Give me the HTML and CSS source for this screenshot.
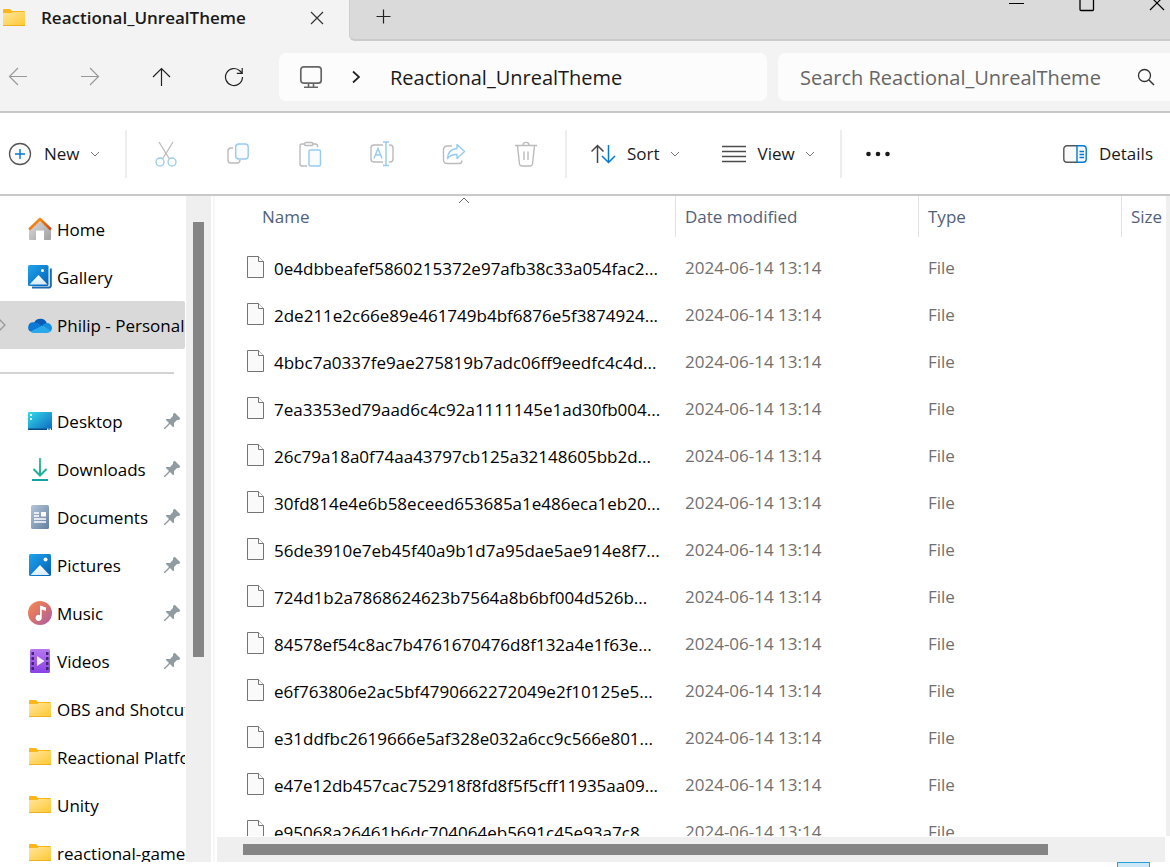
FILE: index.html
```html
<!DOCTYPE html>
<html lang="en">
<head>
<meta charset="utf-8">
<title>Reactional_UnrealTheme</title>
<link rel="stylesheet" href="styles.css">
</head>
<body>
<svg class="defs" aria-hidden="true">
  <defs>
    <linearGradient id="gFolder" x1="0" y1="0" x2="1" y2="1"><stop offset="0" stop-color="#ffe69c"/><stop offset="1" stop-color="#ffc934"/></linearGradient>
    <linearGradient id="gRoof" x1="0" y1="0" x2="1" y2="0"><stop offset="0" stop-color="#ee7a1c"/><stop offset=".5" stop-color="#f58a10"/><stop offset="1" stop-color="#d2430f"/></linearGradient>
    <linearGradient id="gWall" x1="0" y1="0" x2="1" y2="1"><stop offset="0" stop-color="#dedede"/><stop offset="1" stop-color="#a0a0a0"/></linearGradient>
    <linearGradient id="gPic" x1="0" y1="0" x2="1" y2="1"><stop offset="0" stop-color="#1ea4ee"/><stop offset="1" stop-color="#0560b4"/></linearGradient>
    <linearGradient id="gHill" x1="0" y1="0" x2="0" y2="1"><stop offset="0" stop-color="#fff"/><stop offset="1" stop-color="#d5ebfb"/></linearGradient>
    <linearGradient id="gDesk" x1="0" y1="0" x2="1" y2="1"><stop offset="0" stop-color="#35dbe8"/><stop offset="1" stop-color="#0a68c0"/></linearGradient>
    <linearGradient id="gDown" x1="0" y1="0" x2="0" y2="1"><stop offset="0" stop-color="#3bc98b"/><stop offset="1" stop-color="#0fa3a3"/></linearGradient>
    <linearGradient id="gDoc" x1="0" y1="0" x2="1" y2="1"><stop offset="0" stop-color="#b3c6da"/><stop offset="1" stop-color="#647f9f"/></linearGradient>
    <linearGradient id="gMusic" x1="0" y1="0" x2="1" y2="1"><stop offset="0" stop-color="#f58d52"/><stop offset=".5" stop-color="#d7706d"/><stop offset="1" stop-color="#a45cae"/></linearGradient>
    <linearGradient id="gVideo" x1="0" y1="0" x2="0" y2="1"><stop offset="0" stop-color="#b678f0"/><stop offset="1" stop-color="#8842e4"/></linearGradient>
    <symbol id="folder" viewBox="0 1 24 24">
      <path d="M1 5a1 1 0 0 1 1-1h6l2 2h12a1 1 0 0 1 1 1v4H1z" fill="#f9b71b"/>
      <path d="M1 8h8l2-1h12v13H1z" fill="url(#gFolder)"/><path d="M1 20h22v1H1z" fill="#eeb022"/>
    </symbol>
    <symbol id="pin" viewBox="0 0 16 16">
      <path d="M10 0h1l5 5v1l-1 1h-2l-3 3v4h-1L6 11l-5 5H0v-1l5-5-3-3V6h4l3-3V1z" fill="#919ba2"/>
    </symbol>
    <symbol id="file" viewBox="0 0 18 22">
      <path d="M.5.5h11l5 5v16H.5z" fill="#fafafa" stroke="#747474"/><path d="M11.500.5v5h5" fill="#fff" stroke="#747474"/>
    </symbol>
    <symbol id="chev" viewBox="0 0 10 6"><path d="M1 1l4 4 4-4" fill="none" stroke="#777"/></symbol>
  </defs>
</svg>

<div class="window">
  <header class="titlebar">
    <div class="tab">
      <svg class="ico24" aria-hidden="true"><use href="#folder"/></svg>
      <span class="tab-title">Reactional_UnrealTheme</span>
      <button class="icon-btn" aria-label="Close tab"><svg width="14" height="14" viewBox="0 0 14 14"><path d="M1 1l12 12M13 1L1 13" stroke="#333" stroke-width="1.200"/></svg></button>
    </div>
    <div class="tab-strip">
      <button class="icon-btn" aria-label="New tab"><svg width="16" height="16" viewBox="0 0 16 16"><path d="M7.500 .5v14M.5 7.500h14" stroke="#222" stroke-width="1.200"/></svg></button>
      <div class="caption">
        <button class="icon-btn" aria-label="Minimize"><svg width="16" height="16" viewBox="0 0 16 16"><path d="M0 7.500h15" stroke="#000"/></svg></button>
        <button class="icon-btn" aria-label="Maximize"><svg width="16" height="16" viewBox="0 0 16 16"><rect x="1" y="1" width="13.500" height="13.500" rx="1" fill="none" stroke="#000" stroke-width="1.300"/></svg></button>
        <button class="icon-btn" aria-label="Close"><svg width="16" height="16" viewBox="0 0 16 16"><path d="M1 0l14 14M15 0L1 14" stroke="#000" stroke-width="1.200"/></svg></button>
      </div>
    </div>
  </header>

  <div class="navbar">
    <div class="nav-buttons">
      <button class="icon-btn" aria-label="Back" disabled><svg width="20" height="20" viewBox="0 0 20 20"><path d="M19 9.500H1.500M10 1L1.500 9.500l8.500 8.500" fill="none" stroke="#999" stroke-width="1.200"/></svg></button>
      <button class="icon-btn" aria-label="Forward" disabled><svg width="20" height="20" viewBox="0 0 20 20"><path d="M1 9.500h17.500M10 1l8.500 8.500-8.500 8.500" fill="none" stroke="#999" stroke-width="1.200"/></svg></button>
      <button class="icon-btn" aria-label="Up"><svg width="20" height="20" viewBox="0 0 20 20"><path d="M9.500 19V1.500M1 10l8.500-8.500L18 10" fill="none" stroke="#222" stroke-width="1.200"/></svg></button>
      <button class="icon-btn" aria-label="Refresh"><svg width="20" height="20" viewBox="0 0 20 20"><path d="M18.500 10A8.500 8.500 0 1 1 16 4l2 2.200M18.200 1v5.400h-5.400" fill="none" stroke="#222" stroke-width="1.200"/></svg></button>
    </div>
    <div class="address">
      <svg width="24" height="24" viewBox="0 0 24 24" aria-hidden="true"><rect x="1.800" y="1.800" width="20.400" height="16.400" rx="3" fill="none" stroke="#666" stroke-width="1.700"/><path d="M9.500 18v3.500M14.500 18v3.500M5 22.200h14" stroke="#666" stroke-width="1.600"/></svg>
      <svg width="8" height="14" viewBox="0 0 8 14" aria-hidden="true"><path d="M1 1.500l6 5.500-6 5.500" fill="none" stroke="#222" stroke-width="1.700"/></svg>
      <span>Reactional_UnrealTheme</span>
    </div>
    <div class="search">
      <input type="search" aria-label="Search" placeholder="Search Reactional_UnrealTheme">
      <svg width="18" height="18" viewBox="0 0 18 18" aria-hidden="true"><circle cx="7.500" cy="7.500" r="6" fill="none" stroke="#333" stroke-width="1.300"/><path d="M12 12l5 5" stroke="#333" stroke-width="1.500"/></svg>
    </div>
  </div>

  <div class="toolbar">
    <button class="tool tool-new"><svg width="26" height="24" viewBox="0 0 26 24"><circle cx="12" cy="12" r="10.500" fill="#fafafa" stroke="#555" stroke-width="1.300"/><path d="M12 7v10M7 12h10" stroke="#0078d4" stroke-width="1.400"/></svg>New<svg class="chev"><use href="#chev"/></svg></button>
    <div class="tool-icons">
      <button class="icon-btn" aria-label="Cut" disabled><svg width="24" height="26" viewBox="0 0 24 26" fill="none" stroke-width="1.300"><path d="M5 1l10.500 17M19 1L8.500 18" stroke="#bbb"/><circle cx="6" cy="21" r="4" stroke="#97caef"/><circle cx="18" cy="21" r="4" stroke="#97caef"/></svg></button>
      <button class="icon-btn" aria-label="Copy" disabled><svg width="24" height="26" viewBox="0 0 24 26" fill="none" stroke-width="1.400"><path d="M7 7H5a3 3 0 0 0-3 3v9a3 3 0 0 0 3 3h6a3 3 0 0 0 3-3" stroke="#bbb"/><rect x="9.700" y="3" width="12.500" height="15" rx="3" fill="#f8fbff" stroke="#97caef"/></svg></button>
      <button class="icon-btn" aria-label="Paste" disabled><svg width="24" height="26" viewBox="0 0 24 26" fill="none" stroke-width="1.400"><path d="M6.500 3H4a2 2 0 0 0-2 2v18a2 2 0 0 0 2 2h5M15 3h2.500a2 2 0 0 1 2 2v1" stroke="#bbb"/><rect x="6.500" y="1.500" width="8.500" height="3" rx="1.500" stroke="#bbb"/><rect x="11" y="9" width="11.500" height="16" rx="1.500" fill="#f8fbff" stroke="#97caef"/></svg></button>
      <button class="icon-btn" aria-label="Rename" disabled><svg width="24" height="26" viewBox="1 0 24 26" fill="none" stroke-width="1.400"><path d="M14 4H5a3 3 0 0 0-3 3v11a3 3 0 0 0 3 3h9M20 4h1a3 3 0 0 1 3 3v11a3 3 0 0 1-3 3h-1" stroke="#bbb"/><path d="M5 17.500L9 7.500l4 10M6.500 14h5.500M14 1h6M14 24.500h6M17 1v23.500" stroke="#97caef"/></svg></button>
      <button class="icon-btn" aria-label="Share" disabled><svg width="24" height="26" viewBox="0 0 24 26" fill="none" stroke-width="1.400"><path d="M10 5H5a3.500 3.500 0 0 0-3.500 3.500V19A3.500 3.500 0 0 0 5 22.500h12a3 3 0 0 0 3-3" stroke="#bbb"/><path d="M15 3.500l7.500 7-7.500 7v-4c-4.500-.3-7 1-9.500 4 .3-6 3.500-9.500 9.500-10z" fill="#f8fbff" stroke="#97caef" stroke-linejoin="round"/></svg></button>
      <button class="icon-btn" aria-label="Delete" disabled><svg width="24" height="26" viewBox="0 0 24 26" fill="none" stroke="#bbb" stroke-width="1.400"><path d="M1 4.500h22M9 4c0-3.500 6-3.500 6 0M3.500 5l2 18q.3 2 2.300 2h8.400q2 0 2.300-2l2-18M10 10.500v8.500M14 10.500v8.500"/></svg></button>
    </div>
    <button class="tool tool-sort"><svg width="26" height="20" viewBox="0 0 26 20" fill="none" stroke-width="1.500"><path d="M6.500 19V1.500M.5 7.500l6-6 6 6" stroke="#444"/><path d="M17.500 1v17.500M11 12l6.500 6.500L24 12" stroke="#0078d4"/></svg>Sort<svg class="chev"><use href="#chev"/></svg></button>
    <button class="tool tool-view"><svg width="26" height="18" viewBox="0 0 26 18"><path d="M0 1.500h24M0 6.500h24M0 11.500h24M0 16.500h24" stroke="#4c4c4c" stroke-width="1.300"/></svg>View<svg class="chev"><use href="#chev"/></svg></button>
    <button class="icon-btn tool-more" aria-label="See more"><svg width="24" height="6" viewBox="0 0 24 6" fill="#1a1a1a"><circle cx="2.500" cy="3" r="2.300"/><circle cx="12" cy="3" r="2.300"/><circle cx="21.500" cy="3" r="2.300"/></svg></button>
    <button class="tool tool-details"><svg width="26" height="18" viewBox="0 0 26 18" fill="none" stroke-width="1.400"><path d="M14 .8H4A3.200 3.200 0 0 0 .8 4v10A3.200 3.200 0 0 0 4 17.200h10" fill="#fafafa" stroke="#555"/><path d="M14 .8h6A3.200 3.200 0 0 1 23.200 4v10a3.200 3.200 0 0 1-3.200 3.200h-6z" fill="#f4faff" stroke="#0078d4"/><path d="M16.500 6.500h4.500M16.500 9.500h4.500M16.500 12.500h4.500" stroke="#0078d4"/></svg>Details</button>
  </div>

  <div class="main">
    <nav class="sidebar">
      <div class="places">
        <a href="#"><svg class="ico24" viewBox="0 0 24 24"><path d="M1 11L12 2l11 9v11a1 1 0 0 1-1 1h-6v-9.500H8V23H2a1 1 0 0 1-1-1z" fill="url(#gWall)"/><path d="M1.200 12.500L12 2l10.800 10.500" fill="none" stroke="url(#gRoof)" stroke-width="2.600" stroke-linejoin="round"/></svg><span>Home</span></a>
        <a href="#"><svg class="ico24" viewBox="0 0 24 24"><path d="M4 22.500h17a1.800 1.800 0 0 0 1.800-1.800V3.500" fill="none" stroke="#1c69b4" stroke-width="2"/><rect width="20.500" height="21" rx="1.500" fill="url(#gPic)"/><path d="M1.500 19.500L10.500 10l9 9.500z" fill="url(#gHill)"/><circle cx="14.500" cy="5.500" r="1.500" fill="#fff"/></svg><span>Gallery</span></a>
        <a href="#" class="current" aria-current="page"><svg class="expander" viewBox="0 0 8 14"><path d="M1 1l6 6-6 6" fill="none" stroke="#999" stroke-width="1.300"/></svg><svg class="ico24" viewBox="0 0 24 24"><path d="M6 10a7 7 0 0 1 13 .5L12 16z" fill="#0c5bb5"/><path d="M5.500 9.300q3-.4 6 1.700l4 3-12 5A5 5 0 0 1 5.500 9.300z" fill="#0b78d4"/><path d="M14 12.500q2-2.500 5-2.500a5 5 0 0 1 5 5q0 2-1.500 3.500z" fill="#1490df"/><path d="M2.500 18.500L14 12.800l9 5.200q-1.500 2-4 2H6q-2.500 0-3.500-1.500z" fill="#29a8ea"/></svg><span>Philip - Personal</span></a>
        <hr>
        <a href="#"><svg class="ico24" viewBox="0 0 24 24"><rect y="3" width="24" height="18" rx="1" fill="url(#gDesk)"/><path d="M0 19.500h24v.5a1 1 0 0 1-1 1H1a1 1 0 0 1-1-1z" fill="#0b4a82"/><path d="M2 5h2v2H2zM2 9h2v2H2zM19 19.500h1.500V21H19zM21.500 19.500H23V21h-1.500z" fill="#dff"/></svg><span>Desktop</span><svg class="pin"><use href="#pin"/></svg></a>
        <a href="#"><svg class="ico24" viewBox="0 0 24 24"><path d="M11 1h2v17h-2zM4 22h16v2H4z" fill="url(#gDown)"/><path d="M5.500 12l6.500 6.500 6.500-6.500" fill="none" stroke="#1bb098" stroke-width="2"/></svg><span>Downloads</span><svg class="pin"><use href="#pin"/></svg></a>
        <a href="#"><svg class="ico24" viewBox="0 0 24 24"><rect x="3" width="18" height="24" rx="1.500" fill="url(#gDoc)"/><path d="M6 8h5M6 11h5M6 14h12M6 17h12" stroke="#fff" stroke-width="1.400"/><path d="M13 7h5v4.500h-5z" fill="#fff"/></svg><span>Documents</span><svg class="pin"><use href="#pin"/></svg></a>
        <a href="#"><svg class="ico24" viewBox="0 0 24 24"><rect x="1" y="1" width="22" height="22" rx="1.500" fill="url(#gPic)"/><path d="M2.500 22L12 12l9.500 10z" fill="url(#gHill)"/><circle cx="17.500" cy="6.500" r="2" fill="#fff"/></svg><span>Pictures</span><svg class="pin"><use href="#pin"/></svg></a>
        <a href="#"><svg class="ico24" viewBox="0 0 24 24"><circle cx="12" cy="12" r="12" fill="url(#gMusic)"/><path d="M12 4.500l6 2v3.500l-4.300-1.400V17a3.100 3.100 0 1 1-1.700-2.800z" fill="#fff"/></svg><span>Music</span><svg class="pin"><use href="#pin"/></svg></a>
        <a href="#"><svg class="ico24" viewBox="0 0 24 24"><rect x="2" width="20" height="24" rx="1.500" fill="url(#gVideo)"/><path d="M3.500 3h2.500v3H3.500zM3.500 8h2.500v3H3.500zM3.500 13h2.500v3H3.500zM3.500 18h2.500v3H3.500zM18 3h2.500v3H18zM18 8h2.500v3H18zM18 13h2.500v3H18zM18 18h2.500v3H18z" fill="#432677"/><path d="M9 7l7.500 5L9 17z" fill="#f5eefe"/></svg><span>Videos</span><svg class="pin"><use href="#pin"/></svg></a>
        <a href="#"><svg class="ico24"><use href="#folder"/></svg><span>OBS and Shotcut</span></a>
        <a href="#"><svg class="ico24"><use href="#folder"/></svg><span>Reactional Platform</span></a>
        <a href="#"><svg class="ico24"><use href="#folder"/></svg><span>Unity</span></a>
        <a href="#"><svg class="ico24"><use href="#folder"/></svg><span>reactional-game</span></a>
      </div>
      <div class="scroll-y"><div class="thumb"></div></div>
    </nav>

    <section class="content">
      <div class="list-row">
        <div class="list">
          <svg class="sort-mark" viewBox="0 0 12 7"><path d="M1 6l5-5 5 5" fill="none" stroke="#666"/></svg>
          <table>
            <colgroup><col><col class="c-date"><col class="c-type"><col class="c-size"></colgroup>
            <thead><tr><th>Name</th><th>Date modified</th><th>Type</th><th>Size</th></tr></thead>
            <tbody>
              <tr><td><svg class="file"><use href="#file"/></svg>0e4dbbeafef5860215372e97afb38c33a054fac2...</td><td>2024-06-14 13:14</td><td>File</td><td></td></tr>
              <tr><td><svg class="file"><use href="#file"/></svg>2de211e2c66e89e461749b4bf6876e5f3874924...</td><td>2024-06-14 13:14</td><td>File</td><td></td></tr>
              <tr><td><svg class="file"><use href="#file"/></svg>4bbc7a0337fe9ae275819b7adc06ff9eedfc4c4d...</td><td>2024-06-14 13:14</td><td>File</td><td></td></tr>
              <tr><td><svg class="file"><use href="#file"/></svg>7ea3353ed79aad6c4c92a1111145e1ad30fb004...</td><td>2024-06-14 13:14</td><td>File</td><td></td></tr>
              <tr><td><svg class="file"><use href="#file"/></svg>26c79a18a0f74aa43797cb125a32148605bb2d...</td><td>2024-06-14 13:14</td><td>File</td><td></td></tr>
              <tr><td><svg class="file"><use href="#file"/></svg>30fd814e4e6b58eceed653685a1e486eca1eb20...</td><td>2024-06-14 13:14</td><td>File</td><td></td></tr>
              <tr><td><svg class="file"><use href="#file"/></svg>56de3910e7eb45f40a9b1d7a95dae5ae914e8f7...</td><td>2024-06-14 13:14</td><td>File</td><td></td></tr>
              <tr><td><svg class="file"><use href="#file"/></svg>724d1b2a7868624623b7564a8b6bf004d526b...</td><td>2024-06-14 13:14</td><td>File</td><td></td></tr>
              <tr><td><svg class="file"><use href="#file"/></svg>84578ef54c8ac7b4761670476d8f132a4e1f63e...</td><td>2024-06-14 13:14</td><td>File</td><td></td></tr>
              <tr><td><svg class="file"><use href="#file"/></svg>e6f763806e2ac5bf4790662272049e2f10125e5...</td><td>2024-06-14 13:14</td><td>File</td><td></td></tr>
              <tr><td><svg class="file"><use href="#file"/></svg>e31ddfbc2619666e5af328e032a6cc9c566e801...</td><td>2024-06-14 13:14</td><td>File</td><td></td></tr>
              <tr><td><svg class="file"><use href="#file"/></svg>e47e12db457cac752918f8fd8f5f5cff11935aa09...</td><td>2024-06-14 13:14</td><td>File</td><td></td></tr>
              <tr><td><svg class="file"><use href="#file"/></svg>e95068a26461b6dc704064eb5691c45e93a7c8...</td><td>2024-06-14 13:14</td><td>File</td><td></td></tr>
            </tbody>
          </table>
        </div>
        <div class="track-edge"></div>
      </div>
      <div class="scroll-x"><div class="thumb"></div></div>
    </section>
  </div>

  <footer class="statusbar"><button class="view-toggle" aria-label="Details view"></button></footer>
</div>
</body>
</html>
```
FILE: styles.css
```css
* { box-sizing: border-box; }
body { margin: 0; font-family: "Open Sans", "Noto Sans", sans-serif; font-size: 17px; color: #1a1a1a; background: #fff; }
button { font: inherit; color: inherit; border: 0; padding: 0; background: none; }
svg { display: block; flex: none; }
.defs { position: absolute; width: 0; height: 0; }
.ico24 { width: 24px; height: 24px; }
.icon-btn { display: flex; align-items: center; justify-content: center; }
.window { height: 100vh; display: flex; flex-direction: column; overflow: hidden; }

.titlebar { flex: none; display: flex; height: 41px; background: #f3f3f3; }
.tab { flex: none; width: 349px; display: flex; align-items: center; gap: 15px; padding: 0 25px 6px 2px; }
.tab-title { flex: 1; font-weight: 600; white-space: nowrap; }
.tab-strip { flex: 1; display: flex; justify-content: space-between; padding-left: 26px; background: #dadada; border-bottom: 2px solid #cacaca; border-left: 1px solid #cfcfcf; border-bottom-left-radius: 6px; }
.tab-strip > .icon-btn { height: 34px; }
.caption { display: flex; gap: 54px; height: 7px; padding-right: 5px; }

.navbar { flex: none; display: flex; align-items: center; height: 72px; padding-top: 2px; background: #f3f3f3; border-bottom: 2px solid #c8c8c8; font-size: 20px; }
.nav-buttons { flex: none; width: 279px; display: flex; gap: 52px; padding-left: 8px; }
.address { flex: 1 1 488px; height: 48px; display: flex; align-items: center; padding-left: 20px; background: #fcfcfc; border-radius: 7px; white-space: nowrap; }
.address svg + svg { margin: 0 30px 0 29px; }
.search { flex: 1 1 392px; height: 48px; margin-left: 11px; padding: 0 15px 0 22px; display: flex; align-items: center; background: #fcfcfc; border-radius: 7px 0 0 7px; }
.search input { flex: 1; min-width: 0; padding: 0; border: 0; outline: 0; background: none; font: inherit; color: #222; }
.search input::placeholder { color: #666; opacity: 1; }

.toolbar { flex: none; display: flex; align-items: center; height: 83px; border-bottom: 2px solid #c8c8c8; white-space: nowrap; }
.tool { display: flex; align-items: center; gap: 10px; }
.chev { width: 10px; height: 6px; }
.tool-new { width: 127px; height: 48px; padding-left: 8px; border-right: 2px solid #eee; }
.tool-icons { display: flex; gap: 48px; padding: 11px 27px; height: 48px; border-right: 2px solid #eee; }
.tool-sort { margin-left: 24px; }
.tool-view { margin-left: 42px; }
.tool-more { height: 48px; margin-left: 25px; padding-left: 24px; border-left: 2px solid #eee; }
.tool-details { margin: 0 17px 0 auto; }

.main { flex: 1; min-height: 0; display: flex; }
.sidebar { flex: none; width: 215px; display: flex; border-right: 2px solid #f7f7f7; overflow: hidden; }
.places { flex: none; width: 186px; padding: 9px 1px 0 0; overflow: hidden; }
.places a { position: relative; display: flex; align-items: center; gap: 5px; height: 48px; padding: 0 5px 0 28px; color: #000; text-decoration: none; white-space: nowrap; overflow: hidden; }
.places a span { flex: 1 0 auto; }
.places .current { background: #d9d9d9; border-radius: 0 2px 2px 0; }
.expander { position: absolute; left: -2px; top: 17px; width: 8px; height: 14px; }
.places hr { height: 2px; margin: 23px 11px 23px 0; border: 0; background: #d4d4d4; }
.pin { width: 16px; height: 16px; }
.scroll-y { width: 25px; padding: 26px 7px 0; background: #efefef; }
.scroll-y .thumb { height: 68%; background: #858585; }

.content { flex: 1; min-width: 0; display: flex; flex-direction: column; padding-left: 2px; }
.list-row { flex: 1; min-height: 0; display: flex; padding-bottom: 1px; }
.list { position: relative; flex: 1; overflow: hidden; }
.track-edge { width: 4px; background: #efefef; }
.sort-mark { position: absolute; left: 241px; top: 1px; width: 12px; height: 7px; }
table { width: 100%; table-layout: fixed; border-collapse: separate; border-spacing: 0; white-space: nowrap; }
.c-date { width: 243px; }
.c-type { width: 203px; }
.c-size { width: 45px; }
th { height: 41px; padding: 0 0 0 9px; text-align: left; font-weight: 400; color: #51617a; border-left: 1px solid #e2e2e2; }
th:first-child { padding-left: 45px; border-left: 0; }
thead::after { content: ""; display: block; height: 7px; }
td { height: 47px; padding: 0 0 0 10px; color: #707070; }
td:first-child { padding-left: 30px; color: #000; }
.file { display: inline-block; width: 18px; height: 22px; margin-right: 9px; vertical-align: -3px; }
.scroll-x { flex: none; height: 25px; margin-right: 5px; padding: 7px 0 7px 26px; background: #efefef; }
.scroll-x .thumb { width: 87.3%; height: 11px; background: #858585; }

.statusbar { flex: none; display: flex; justify-content: flex-end; height: 5px; padding-right: 20px; overflow: hidden; }
.view-toggle { width: 33px; height: 24px; background: #cce8f6; border: 1px solid #26a0da; }
```
